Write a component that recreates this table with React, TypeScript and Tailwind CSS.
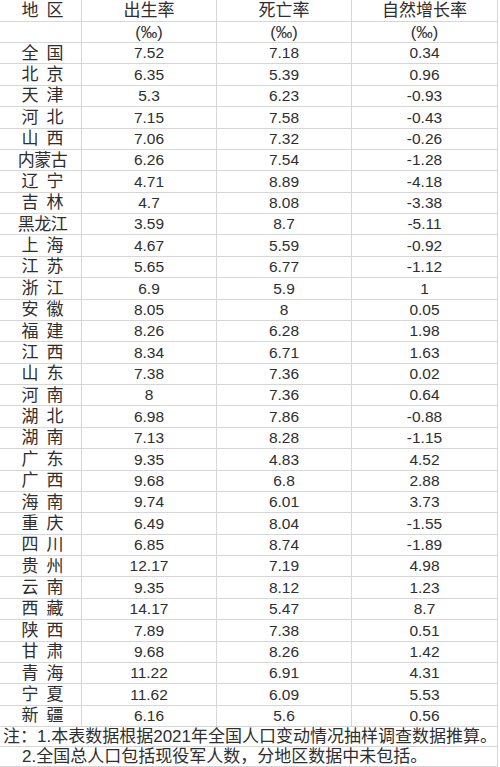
const rows: [string, string, string, string][] = [
  ["全国", "7.52", "7.18", "0.34"],
  ["北京", "6.35", "5.39", "0.96"],
  ["天津", "5.3", "6.23", "-0.93"],
  ["河北", "7.15", "7.58", "-0.43"],
  ["山西", "7.06", "7.32", "-0.26"],
  ["内蒙古", "6.26", "7.54", "-1.28"],
  ["辽宁", "4.71", "8.89", "-4.18"],
  ["吉林", "4.7", "8.08", "-3.38"],
  ["黑龙江", "3.59", "8.7", "-5.11"],
  ["上海", "4.67", "5.59", "-0.92"],
  ["江苏", "5.65", "6.77", "-1.12"],
  ["浙江", "6.9", "5.9", "1"],
  ["安徽", "8.05", "8", "0.05"],
  ["福建", "8.26", "6.28", "1.98"],
  ["江西", "8.34", "6.71", "1.63"],
  ["山东", "7.38", "7.36", "0.02"],
  ["河南", "8", "7.36", "0.64"],
  ["湖北", "6.98", "7.86", "-0.88"],
  ["湖南", "7.13", "8.28", "-1.15"],
  ["广东", "9.35", "4.83", "4.52"],
  ["广西", "9.68", "6.8", "2.88"],
  ["海南", "9.74", "6.01", "3.73"],
  ["重庆", "6.49", "8.04", "-1.55"],
  ["四川", "6.85", "8.74", "-1.89"],
  ["贵州", "12.17", "7.19", "4.98"],
  ["云南", "9.35", "8.12", "1.23"],
  ["西藏", "14.17", "5.47", "8.7"],
  ["陕西", "7.89", "7.38", "0.51"],
  ["甘肃", "9.68", "8.26", "1.42"],
  ["青海", "11.22", "6.91", "4.31"],
  ["宁夏", "11.62", "6.09", "5.53"],
  ["新疆", "6.16", "5.6", "0.56"],
];

const font = { fontFamily: '"Liberation Sans", "Noto Sans CJK SC", sans-serif' };

function Name({ text }: { text: string }) {
  // two-character names are spread out like the spreadsheet
  if (text.length === 2) {
    return (
      <div className="flex gap-[8px] pl-[4px]">
        <span>{text[0]}</span>
        <span>{text[1]}</span>
      </div>
    );
  }
  return <div className="pl-[4px] tracking-[-0.5px]">{text}</div>;
}

function Row({ cells, h, head }: { cells: React.ReactNode[]; h: string; head?: boolean }) {
  return (
    <div className={`grid grid-cols-[82px_135px_135px_146px] ${h}`}>
      {cells.map((c, i) => (
        <div
          key={i}
          className={`flex items-center justify-center border-b border-r border-[#d6d6d6] ${
            i === 0 || head ? "text-[17px]" : "text-[15.5px]"
          }`}
        >
          {c}
        </div>
      ))}
    </div>
  );
}

export default function App() {
  return (
    <div className="w-[500px] h-[767px] bg-white text-[#2e2e2e] overflow-hidden leading-none" style={font}>
      <Row h="h-[22px]" head cells={[<Name text="地区" />, "出生率", "死亡率", "自然增长率"]} />
      <Row h="h-[21px]" cells={["", <span className="text-[16.5px]">(‰)</span>, <span className="text-[16.5px]">(‰)</span>, <span className="text-[16.5px]">(‰)</span>]} />
      {rows.map((r) => (
        <Row key={r[0]} h="h-[21.375px]" cells={[<Name text={r[0]} />, r[1], r[2], r[3]]} />
      ))}
      <div className="w-[498px] h-[20px] flex items-center border-b border-r border-[#d6d6d6] text-[17px] pl-[3px] whitespace-nowrap">
        注：1.本表数据根据2021年全国人口变动情况抽样调查数据推算。
      </div>
      <div className="w-[498px] h-[20px] flex items-center border-b border-r border-[#d6d6d6] text-[17px] pl-[22px] whitespace-nowrap">
        2.全国总人口包括现役军人数，分地区数据中未包括。
      </div>
    </div>
  );
}
